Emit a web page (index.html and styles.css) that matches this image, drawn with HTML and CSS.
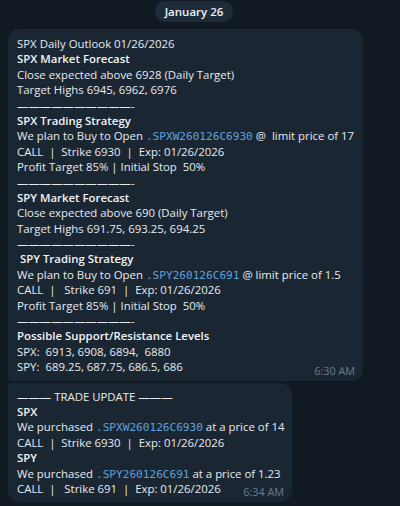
FILE: index.html
```html
<!DOCTYPE html>
<html>
<head>
<meta charset="utf-8">
<link rel="stylesheet" href="styles.css">
</head>
<body>
<div class="chat">
  <div class="date-row"><span class="date-pill">January 26</span></div>

  <div class="msg msg-first">
    <div class="line">SPX Daily Outlook 01/26/2026</div>
    <div class="line b">SPX Market Forecast</div>
    <div class="line">Close expected above 6928 (Daily Target)</div>
    <div class="line">Target Highs 6945, 6962, 6976</div>
    <div class="line">——————————-</div>
    <div class="line b">SPX Trading Strategy</div>
    <div class="line">We plan to Buy to Open <span class="code">.SPXW260126C6930</span> @  limit price of 17</div>
    <div class="line">CALL  |  Strike 6930  |  Exp: 01/26/2026</div>
    <div class="line">Profit Target 85% | Initial Stop  50%</div>
    <div class="line">——————————-</div>
    <div class="line b">SPY Market Forecast</div>
    <div class="line">Close expected above 690 (Daily Target)</div>
    <div class="line">Target Highs 691.75, 693.25, 694.25</div>
    <div class="line">——————————-</div>
    <div class="line b"> SPY Trading Strategy</div>
    <div class="line">We plan to Buy to Open <span class="code">.SPY260126C691</span> @ limit price of 1.5</div>
    <div class="line">CALL  |   Strike 691  |  Exp: 01/26/2026</div>
    <div class="line">Profit Target 85% | Initial Stop  50%</div>
    <div class="line">——————————-</div>
    <div class="line b">Possible Support/Resistance Levels</div>
    <div class="line">SPX:  6913, 6908, 6894,  6880</div>
    <div class="line">SPY:  689.25, 687.75, 686.5, 686</div>
    <span class="time">6:30 AM</span>
  </div>

  <div class="msg msg-last">
    <div class="line">——— TRADE UPDATE ———</div>
    <div class="line b">SPX</div>
    <div class="line">We purchased <span class="code">.SPXW260126C6930</span> at a price of 14</div>
    <div class="line">CALL  |  Strike 6930  |  Exp: 01/26/2026</div>
    <div class="line b">SPY</div>
    <div class="line">We purchased <span class="code">.SPY260126C691</span> at a price of 1.23</div>
    <div class="line">CALL  |   Strike 691  |  Exp: 01/26/2026</div>
    <span class="time">6:34 AM</span>
  </div>
</div>
</body>
</html>
```

FILE: styles.css
```css
html, body {
  margin: 0;
  padding: 0;
  background: #111923;
  height: 100%;
  overflow: hidden;
}

.chat {
  font-family: "Open Sans", "Noto Sans", sans-serif;
  color: #e6ebf0;
  font-size: 11.4px;
  display: flex;
  flex-direction: column;
  align-items: flex-start;
  padding: 1px 0 0 8px;
}

.date-row {
  align-self: stretch;
  display: flex;
  justify-content: center;
  padding-right: 20px;
  margin-bottom: 7px;
}

.date-pill {
  background: #1e2b39;
  color: #eef2f6;
  font-weight: 600;
  font-size: 11.5px;
  height: 21px;
  line-height: 21px;
  padding: 0 10px;
  border-radius: 11px;
}

.msg {
  position: relative;
  background: #1b2633;
  padding: 7px 9px 6px 9px;
  box-sizing: border-box;
}

.msg-first {
  width: 355px;
  border-radius: 12px 12px 12px 4px;
  margin-bottom: 2px;
}

.msg-last {
  width: 284px;
  padding-top: 6px;
  border-radius: 4px 12px 12px 12px;
}

.line {
  white-space: pre;
  line-height: 15.4px;
  height: 15.4px;
}

.b {
  font-weight: 600;
  color: #f2f5f8;
}

.code {
  font-family: "DejaVu Sans Mono", "Liberation Mono", monospace;
  font-size: 11.1px;
  color: #5fa2da;
}

.time {
  position: absolute;
  right: 8px;
  bottom: 3px;
  font-size: 10.8px;
  line-height: 14px;
  color: #6b7c8d;
}
```
